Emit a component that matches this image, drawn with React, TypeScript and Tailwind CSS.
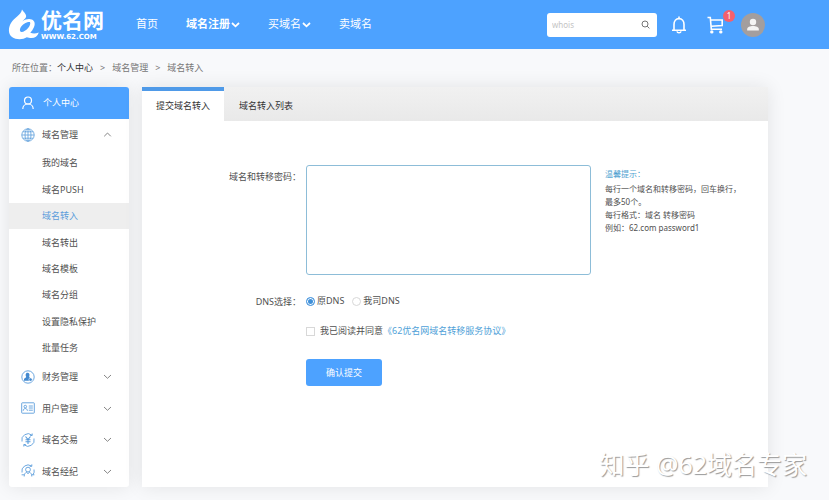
import React from "react";

const subItems = ["我的域名", "域名PUSH", "域名转入", "域名转出", "域名模板", "域名分组", "设置隐私保护", "批量任务"];

function Logo() {
  return (
    <a href="#" className="flex w-[98px] shrink-0 items-center gap-0.5">
      <svg width="31" height="31" viewBox="0 0 31 31" fill="none" className="shrink-0">
        <path
          fillRule="evenodd"
          fill="#fff"
          d="M14 0.500C15 2.500 18 4.500 18.200 7C18.300 9 16 10.500 14.300 12.500C17.500 10.200 21 9.500 23.800 10.600C27 12 27.400 15.500 25.800 18.600C25 20.500 23.800 22.200 22.300 23.700C25 24.800 28 24.600 30.800 23.400C29.500 27 27 29 23.500 29C21.500 29 20.300 28.700 18.800 28.300C15 30.800 8 31 4 28C0 25 0.200 18.500 3 14C6.500 8.500 13 6 14 0.500ZM22 13C18.500 12.600 14.300 15.300 12.600 18.500C11.500 20.600 11.600 22.600 13.400 22.900C17.300 23.300 23.600 16.500 22 13Z"
        />
      </svg>
      <span className="flex flex-col font-['Liberation_Sans','Noto_Sans_CJK_SC',sans-serif] text-white">
        <span className="text-[21px] leading-[24px] font-bold whitespace-nowrap">优名网</span>
        <span className="font-['DejaVu_Sans'] text-[7px] leading-[8px] font-bold">WWW.62.COM</span>
      </span>
    </a>
  );
}

function Chevron({ up = false, bold = false }: { up?: boolean; bold?: boolean }) {
  return (
    <svg width="9" height="9" viewBox="0 0 9 9" fill="none" stroke="currentColor" strokeWidth={bold ? 1.8 : 0.9}>
      <path d={up ? "M1.200 6.300L4.500 3L7.800 6.300" : "M1 3L4.500 6.300L8 3"} />
    </svg>
  );
}

function Header() {
  return (
    <header className="flex h-[49px] items-center bg-[#4da2ff] pr-[64px] pl-2">
      <Logo />
      <nav className="ml-[30px] flex items-center gap-7 text-[11px] whitespace-nowrap text-white">
        <a href="#">首页</a>
        <a href="#" className="flex items-center gap-px font-bold">
          域名注册
          <Chevron bold />
        </a>
        <a href="#" className="flex items-center gap-px">
          买域名
          <Chevron bold />
        </a>
        <a href="#">卖域名</a>
      </nav>
      <div className="ml-auto flex items-center">
        <form className="flex h-6 w-[110px] items-center rounded-[3px] bg-white px-[5px]">
          <input type="text" aria-label="whois" placeholder="whois" className="w-full min-w-0 text-[8px] text-gray-600 outline-none placeholder:text-[#c4c4c4]" />
          <button type="button" aria-label="搜索" className="mr-0.5 shrink-0 text-[#666]">
            <svg width="9" height="9" viewBox="0 0 9 9" fill="none" stroke="currentColor" strokeWidth="0.9">
              <circle cx="4" cy="4" r="3" />
              <path d="M6.200 6.200L8.400 8.400" />
            </svg>
          </button>
        </form>
        <button type="button" aria-label="消息" className="ml-[14px] text-white">
          <svg width="16" height="18" viewBox="0 0 16 18" fill="none" stroke="currentColor" strokeWidth="1.600">
            <path d="M8 0.500V2.500M1 14.300H15M3 14.300V8.500C3 5 5 2.600 8 2.600S13 5 13 8.500V14.300" />
            <path d="M6 15.300C6.400 17.300 9.600 17.300 10 15.300" />
          </svg>
        </button>
        <button type="button" aria-label="购物车" className="relative ml-5 text-white">
          <svg width="17" height="18" viewBox="0 0 17 18" fill="none" stroke="currentColor" strokeWidth="1.600">
            <path d="M0.500 1.500H3.300L4.300 13.200H15M3.700 4H15.200V9.500L4.200 10.200" />
            <circle cx="4.800" cy="15.900" r="0.900" fill="currentColor" />
            <circle cx="13.800" cy="15.900" r="0.900" fill="currentColor" />
          </svg>
          <span className="absolute -top-1.5 left-4 h-3 w-3 rounded-full bg-[#f5606d] text-center text-[8px] leading-3">1</span>
        </button>
        <a href="#" aria-label="个人中心" className="ml-[17px]">
          <svg width="24" height="24" viewBox="0 0 24 24">
            <circle cx="12" cy="12" r="12" fill="#a39e9e" />
            <circle cx="12" cy="9" r="3.200" fill="#f4f4f4" />
            <path d="M6.200 17.500V16.200C6.200 14 9 13.100 12 13.100S17.800 14 17.800 16.200V17.500Z" fill="#f4f4f4" />
          </svg>
        </a>
      </div>
    </header>
  );
}

function GlobeIcon() {
  return (
    <svg width="14" height="14" viewBox="0 0 14 14" fill="none" stroke="#5b9ddb" strokeWidth="0.8">
      <circle cx="7" cy="7" r="6.200" />
      <ellipse cx="7" cy="7" rx="3" ry="6.200" />
      <path d="M7 0.800V13.200M0.800 7H13.200M1.800 3.800H12.200M1.800 10.200H12.200" />
    </svg>
  );
}

function FinanceIcon() {
  return (
    <svg width="14" height="14" viewBox="0 0 14 14" fill="none" stroke="#5b9ddb" strokeWidth="0.9">
      <circle cx="7" cy="7" r="6.200" />
      <path d="M6.500 2.800C8.200 2.800 8.800 4.200 8.400 5.600C8.200 6.600 8 7 8.600 7.400L10 8.200V10.800H3V9C3.200 8 5 7.800 5.200 7C4.400 5.500 4.400 2.800 6.500 2.800Z" fill="#4289d0" stroke="none" />
      <circle cx="9.600" cy="9.600" r="1.700" fill="#4289d0" stroke="#fff" strokeWidth="0.6" />
    </svg>
  );
}

function CardIcon() {
  return (
    <svg width="14" height="14" viewBox="0 0 14 14" fill="none" stroke="#5b9ddb" strokeWidth="0.9">
      <rect x="0.700" y="1.800" width="12.600" height="10.400" rx="0.600" />
      <circle cx="4.300" cy="5.600" r="1.300" />
      <path d="M2.200 9.800C2.200 6.800 6.400 6.800 6.400 9.800M7.800 5H11.800M7.800 7H11.800M7.800 9.200H11.800" />
    </svg>
  );
}

function TradeIcon() {
  return (
    <svg width="14" height="14" viewBox="0 0 14 14" fill="none" stroke="#5b9ddb" strokeWidth="0.9">
      <path d="M1 8.500A6.200 6.200 0 0 1 11 2.200M13 5.500A6.200 6.200 0 0 1 3 11.800M11.200 0.500V2.500H9.200M2.800 13.500V11.500H4.800" />
      <path d="M4.500 3.500L7 6.600L9.500 3.500M7 6.600V11M4.500 6.800H9.500M4.500 8.800H9.500" strokeWidth="1.100" />
    </svg>
  );
}

function BrokerIcon() {
  return (
    <svg width="14" height="14" viewBox="0 0 14 14" fill="none" stroke="#5b9ddb" strokeWidth="0.9">
      <path d="M1 8.500A6.200 6.200 0 0 1 10.500 2M13 5.500A6.200 6.200 0 0 1 12 10.800M10.800 0.400V2.300H8.800M0.600 10.800H3M11 10.800H13.400" />
      <circle cx="7" cy="5.600" r="2.400" />
      <path d="M3.200 12.500C3.200 9.800 4.500 8.600 5.600 8.200L7 9.800L8.400 8.200C9.500 8.600 10.800 9.800 10.800 12.500" />
    </svg>
  );
}

const groups = [
  { name: "财务管理", icon: <FinanceIcon /> },
  { name: "用户管理", icon: <CardIcon /> },
  { name: "域名交易", icon: <TradeIcon /> },
  { name: "域名经纪", icon: <BrokerIcon /> },
];

function GroupButton({ name, icon, open = false }: { name: string; icon: React.ReactNode; open?: boolean }) {
  return (
    <button type="button" aria-expanded={open} className="flex w-full items-center pr-[17px] pl-3">
      {icon}
      <span className="ml-[7px]">{name}</span>
      <span className="ml-auto text-[#777]">
        <Chevron up={open} />
      </span>
    </button>
  );
}

function Sidebar() {
  return (
    <aside className="w-[120px] shrink-0 overflow-hidden rounded-[3px] bg-white text-[9px] text-[#505050] shadow-[0_0_18px_rgba(0,0,0,0.09)]">
      <a href="#" className="flex h-8 items-center bg-[#4da2ff] pl-[13px] text-white">
        <svg width="12" height="14" viewBox="0 0 12 14" fill="none" stroke="currentColor" strokeWidth="1.200">
          <circle cx="6" cy="4.500" r="3.500" />
          <path d="M0.800 13C0.800 10 3 8 6 8S11.200 10 11.200 13" />
        </svg>
        <span className="ml-[9px]">个人中心</span>
      </a>
      <div className="grid h-[31px]">
        <GroupButton name="域名管理" icon={<GlobeIcon />} open />
      </div>
      <ul className="grid h-[211px] auto-rows-fr">
        {subItems.map((item) => (
          <li key={item} className="grid">
            <a
              href="#"
              className={item === "域名转入" ? "flex items-center bg-[#eeeeee] pl-[33px] text-[#5b9ddb]" : "flex items-center pl-[33px]"}
            >
              {item}
            </a>
          </li>
        ))}
      </ul>
      <div className="grid h-[126px] auto-rows-fr">
        {groups.map((g) => (
          <GroupButton key={g.name} name={g.name} icon={g.icon} />
        ))}
      </div>
    </aside>
  );
}

function DnsOption({ label, checked = false }: { label: string; checked?: boolean }) {
  return (
    <label className="flex items-center gap-0.5">
      <input
        type="radio"
        name="dns"
        defaultChecked={checked}
        className="h-[9px] w-[9px] appearance-none rounded-full border border-[#d8d8d8] bg-white checked:border-[#4f9ae0] checked:bg-[#3f8fd8] checked:shadow-[inset_0_0_0_1px_#fff]"
      />
      {label}
    </label>
  );
}

function TransferForm() {
  return (
    <form className="grid grid-cols-[159px_1fr] gap-x-[5px] pt-11 text-[9px] leading-[14px] text-[#505050]">
      <label htmlFor="domains" className="pt-[5px] text-right">
        域名和转移密码：
      </label>
      <div className="flex items-start">
        <textarea id="domains" className="h-[110px] w-[285px] resize-none rounded-[3px] border border-[#8dbdd8] p-2 outline-none" />
        <div className="ml-[14px] w-[140px] text-[8px] leading-[13px]">
          <p className="mt-0.5 mb-0.5 text-[#4f9fd0]">温馨提示：</p>
          <p>每行一个域名和转移密码，回车换行，最多50个。</p>
          <p>每行格式：域名 转移密码</p>
          <p>例如：62.com password1</p>
        </div>
      </div>

      <span id="dns" className="mt-5 text-right">
        DNS选择：
      </span>
      <div role="radiogroup" aria-labelledby="dns" className="mt-[18px] flex items-center gap-2">
        <DnsOption label="原DNS" checked />
        <DnsOption label="我司DNS" />
      </div>

      <div className="col-start-2 mt-[15px] flex items-center">
        <label className="flex items-center gap-[5px]">
          <input type="checkbox" className="h-[9px] w-[9px] appearance-none border border-[#d8d8d8] bg-white checked:bg-[#4da2ff]" />
          我已阅读并同意
        </label>
        <a href="#" className="text-[#4f9fd8]">
          《62优名网域名转移服务协议》
        </a>
      </div>

      <div className="col-start-2 mt-[21px]">
        <button type="submit" className="h-[27px] w-[76px] rounded-[3px] bg-[#4da2ff] text-white">
          确认提交
        </button>
      </div>
    </form>
  );
}

export default function App() {
  return (
    <div lang="zh-CN" className="relative min-h-screen bg-[#f8f9fb] font-['Noto_Sans','Noto_Sans_CJK_SC',sans-serif]">
      <Header />
      <nav className="flex h-[38px] items-center gap-[7px] pl-3 text-[9px] text-[#777]">
        <span>
          所在位置：
          <a href="#" className="text-[#333]">
            个人中心
          </a>
        </span>
        <span>&gt;</span>
        <a href="#">域名管理</a>
        <span>&gt;</span>
        <span>域名转入</span>
      </nav>
      <div className="flex gap-[13px] pr-[61px] pb-3 pl-[9px]">
        <Sidebar />
        <main className="flex-1 bg-white shadow-[0_0_18px_rgba(0,0,0,0.09)]">
          <div role="tablist" className="flex h-[34px] bg-linear-to-b from-[#f1f1f1] to-[#e9e9e9] text-[9px] text-[#333]">
            <button type="button" role="tab" aria-selected="true" className="border-t-4 border-[#4f9ae8] bg-white px-[14px]">
              提交域名转入
            </button>
            <button type="button" role="tab" aria-selected="false" className="border-t-4 border-transparent px-[15px]">
              域名转入列表
            </button>
          </div>
          <TransferForm />
        </main>
      </div>
      <div className="absolute right-[22px] bottom-[18px] text-[25px] leading-9 whitespace-nowrap text-white [text-shadow:1px_1px_1px_#999]">知乎 @62域名专家</div>
    </div>
  );
}
